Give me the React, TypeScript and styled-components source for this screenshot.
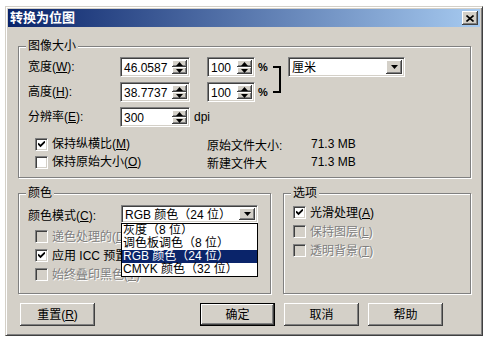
import React, { FC, ReactNode } from 'react';
import styled, { createGlobalStyle, css } from 'styled-components';

const face = '#d4d0c8';
const shadow = '#808080';
const dark = '#404040';

const GlobalStyle = createGlobalStyle`
    body {
        margin: 0;
        background: #fff;
        font-family: "Liberation Sans", "Noto Sans CJK SC", sans-serif;
        font-size: 12px;
        color: #000;
    }
`

const raised = css`
    background: ${face};
    box-shadow: inset -1px -1px ${dark}, inset 1px 1px #fff, inset -2px -2px ${shadow}, inset 2px 2px ${face};
`

const sunken = css`
    background: #fff;
    border: 1px solid;
    border-color: ${shadow} #fff #fff ${shadow};
    box-shadow: inset 1px 1px ${dark}, inset -1px -1px ${face};
    box-sizing: border-box;
`

const Window = styled.div`
    margin: 6px 0 0 5px;
    width: 478px;
    height: 330px;
    box-sizing: border-box;
    background: ${face};
    border: 1px solid;
    border-color: ${face} ${dark} ${dark} ${face};
    box-shadow: inset 1px 1px #fff, inset -1px -1px ${shadow};
    padding: 2px;
    display: flex;
    flex-direction: column;
`

const TitleBar = styled.div`
    height: 18px;
    display: flex;
    align-items: center;
    background: linear-gradient(to right, #0a246a, #a6caf0);
    padding-left: 2px;
`

const TitleText = styled.div`
    flex: 1;
    color: #fff;
    font-weight: bold;
    font-size: 13px;
    line-height: 18px;
`

const CloseButton = styled.div`
    ${raised};
    width: 16px;
    height: 14px;
    margin-right: 2px;
    display: flex;
    align-items: center;
    justify-content: center;
`

const Body = styled.div`
    flex: 1;
    display: flex;
    flex-direction: column;
    padding: 19px 9px 0 10px;
`

const Group = styled.div<{ width?: number; height: number }>`
    position: relative;
    box-sizing: border-box;
    width: ${(p) => (p.width ? `${p.width}px` : 'auto')};
    height: ${(p) => p.height}px;
    border: 1px solid ${shadow};
    box-shadow: inset 1px 1px #fff, 1px 1px #fff;
    padding-left: 9px;
`

const Legend = styled.span`
    position: absolute;
    top: -8px;
    left: 7px;
    padding: 0 2px;
    background: ${face};
    line-height: 14px;
`

const SizeGrid = styled.div`
    display: grid;
    grid-template-columns: 92px 70px 17px 48px 16px 17px 117px;
    grid-template-rows: 20px 20px 20px;
    row-gap: 5px;
    padding-top: 10px;
    align-items: center;
`

const Label = styled.div`
    line-height: 20px;
    white-space: nowrap;
`

const Field = styled.div<{ width: number; height?: number }>`
    ${sunken};
    width: ${(p) => p.width}px;
    height: ${(p) => p.height ?? 20}px;
    display: flex;
    padding: 2px;
`

const FieldText = styled.div<{ lineHeight?: number }>`
    flex: 1;
    line-height: ${(p) => p.lineHeight ?? 16}px;
    padding-left: 1px;
    white-space: nowrap;
`

const SpinCol = styled.div`
    width: 15px;
    display: flex;
    flex-direction: column;
`

const SpinButton = styled.div`
    ${raised};
    flex: 1;
    display: flex;
    align-items: center;
    justify-content: center;
`

const DropButton = styled.div`
    ${raised};
    width: 16px;
    flex: none;
    display: flex;
    align-items: center;
    justify-content: center;
`

const Pct = styled.div`
    padding-left: 3px;
    font-weight: bold;
    font-size: 11px;
`

const Bracket = styled.div`
    grid-column: 6;
    grid-row: 1 / 3;
    align-self: stretch;
    margin: 9px 0 9px 2px;
    width: 6px;
    border: 2px solid #000;
    border-left: none;
`

const Unit = styled.div`
    grid-column: 3 / 6;
    padding-left: 4px;
`

const CheckBlock = styled.div<{ top: number; indent: number; rowHeight: number }>`
    margin-top: ${(p) => p.top}px;
    padding-left: ${(p) => p.indent}px;
    display: flex;
    flex-direction: column;
    & > * {
        height: ${(p) => p.rowHeight}px;
    }
`

const Row = styled.div`
    display: flex;
    align-items: center;
`

const CheckCell = styled.div<{ width?: number }>`
    display: flex;
    align-items: center;
    gap: 4px;
    width: ${(p) => (p.width ? `${p.width}px` : 'auto')};
    white-space: nowrap;
`

const Box = styled.div<{ disabled?: boolean }>`
    ${sunken};
    width: 13px;
    height: 13px;
    flex: none;
    background: ${(p) => (p.disabled ? face : '#fff')};
    display: flex;
    align-items: center;
    justify-content: center;
`

const CheckText = styled.span<{ disabled?: boolean }>`
    line-height: 16px;
    ${(p) =>
        p.disabled &&
        css`
            color: ${shadow};
            text-shadow: 1px 1px #fff;
        `}
`

const InfoLabel = styled.div`
    width: 104px;
`

const GroupRow = styled.div`
    display: flex;
    gap: 12px;
    margin-top: 15px;
`

const ModeRow = styled.div`
    display: flex;
    align-items: center;
    padding-top: 11px;
    height: 18px;
`

const ModeLabel = styled.div`
    width: 93px;
`

const SelectWrap = styled.div`
    position: relative;
`

const DropList = styled.div`
    position: absolute;
    top: 100%;
    left: 0;
    width: 137px;
    box-sizing: border-box;
    border: 1px solid #000;
    background: #fff;
    z-index: 2;
`

const DropItem = styled.div<{ selected?: boolean }>`
    height: 13px;
    line-height: 13px;
    padding-left: 1px;
    white-space: nowrap;
    background: ${(p) => (p.selected ? '#0a246a' : '#fff')};
    color: ${(p) => (p.selected ? '#fff' : '#000')};
`

const ButtonRow = styled.div`
    display: flex;
    gap: 9px;
    margin-top: 9px;
    padding-left: 2px;
    padding-right: 28px;
`

const Button = styled.div<{ primary?: boolean }>`
    ${raised};
    width: 75px;
    height: 23px;
    box-sizing: border-box;
    display: flex;
    align-items: center;
    justify-content: center;
    line-height: 16px;
    ${(p) =>
        p.primary &&
        css`
            border: 1px solid #000;
            margin-left: auto;
        `}
`

const Arrow: FC<{ up?: boolean }> = ({ up }) => (
    <svg width="7" height="4" viewBox="0 0 7 4">
        <polygon points={up ? '0,4 7,4 3.5,0' : '0,0 7,0 3.5,4'} fill="#000" />
    </svg>
);

const Spin: FC<{ value: string; width: number }> = ({ value, width }) => (
    <Field width={width}>
        <FieldText>{value}</FieldText>
        <SpinCol>
            <SpinButton><Arrow up /></SpinButton>
            <SpinButton><Arrow /></SpinButton>
        </SpinCol>
    </Field>
);

const Select: FC<{ value: string; width: number; height?: number }> = ({ value, width, height }) => (
    <Field width={width} height={height}>
        <FieldText lineHeight={height ? height - 4 : undefined}>{value}</FieldText>
        <DropButton><Arrow /></DropButton>
    </Field>
);

const Check: FC<{ checked?: boolean; disabled?: boolean; width?: number; children: ReactNode }> = ({
    checked,
    disabled,
    width,
    children,
}) => (
    <CheckCell width={width}>
        <Box disabled={disabled}>
            {checked && (
                <svg width="7" height="7" viewBox="0 0 7 7">
                    <path d="M0 2.5 L2.5 5 L7 0.5" stroke="#000" strokeWidth="1.8" fill="none" />
                </svg>
            )}
        </Box>
        <CheckText disabled={disabled}>{children}</CheckText>
    </CheckCell>
);

const App: FC = () => (
    <>
        <GlobalStyle />
        <Window>
            <TitleBar>
                <TitleText>转换为位图</TitleText>
                <CloseButton>
                    <svg width="8" height="7" viewBox="0 0 8 7">
                        <path d="M0.5 0.5 L7.5 6.5 M7.5 0.5 L0.5 6.5" stroke="#000" strokeWidth="1.6" />
                    </svg>
                </CloseButton>
            </TitleBar>
            <Body>
                <Group height={132}>
                    <Legend>图像大小</Legend>
                    <SizeGrid>
                        <Label>宽度(<u>W</u>):</Label>
                        <Spin value="46.0587" width={70} />
                        <div />
                        <Spin value="100" width={48} />
                        <Pct>%</Pct>
                        <Bracket />
                        <Select value="厘米" width={117} />

                        <Label>高度(<u>H</u>):</Label>
                        <Spin value="38.7737" width={70} />
                        <div />
                        <Spin value="100" width={48} />
                        <Pct>%</Pct>

                        <Label style={{ gridColumn: 1 }}>分辨率(<u>E</u>):</Label>
                        <Spin value="300" width={70} />
                        <Unit>dpi</Unit>
                    </SizeGrid>
                    <CheckBlock top={8} indent={7} rowHeight={18}>
                        <Row>
                            <Check checked width={172}>保持纵横比(<u>M</u>)</Check>
                            <InfoLabel>原始文件大小:</InfoLabel>
                            <div>71.3 MB</div>
                        </Row>
                        <Row>
                            <Check width={172}>保持原始大小(<u>O</u>)</Check>
                            <InfoLabel>新建文件大</InfoLabel>
                            <div>71.3 MB</div>
                        </Row>
                    </CheckBlock>
                </Group>

                <GroupRow>
                    <Group width={253} height={101}>
                        <Legend>颜色</Legend>
                        <ModeRow>
                            <ModeLabel>颜色模式(<u>C</u>):</ModeLabel>
                            <SelectWrap>
                                <Select value="RGB 颜色（24 位）" width={137} height={18} />
                                <DropList>
                                    <DropItem>灰度（8 位）</DropItem>
                                    <DropItem>调色板调色（8 位）</DropItem>
                                    <DropItem selected>RGB 颜色（24 位）</DropItem>
                                    <DropItem>CMYK 颜色（32 位）</DropItem>
                                </DropList>
                            </SelectWrap>
                        </ModeRow>
                        <CheckBlock top={4} indent={7} rowHeight={19}>
                            <Check disabled>递色处理的(<u>D</u>)</Check>
                            <Check checked>应用 ICC 预置文件(<u>I</u>)</Check>
                            <Check disabled>始终叠印黑色(<u>Y</u>)</Check>
                        </CheckBlock>
                    </Group>
                    <Group width={188} height={101}>
                        <Legend>选项</Legend>
                        <CheckBlock top={9} indent={0} rowHeight={19}>
                            <Check checked>光滑处理(<u>A</u>)</Check>
                            <Check disabled>保持图层(<u>L</u>)</Check>
                            <Check disabled>透明背景(<u>T</u>)</Check>
                        </CheckBlock>
                    </Group>
                </GroupRow>

                <ButtonRow>
                    <Button>重置(<u>R</u>)</Button>
                    <Button primary>确定</Button>
                    <Button>取消</Button>
                    <Button>帮助</Button>
                </ButtonRow>
            </Body>
        </Window>
    </>
);

export default App;
